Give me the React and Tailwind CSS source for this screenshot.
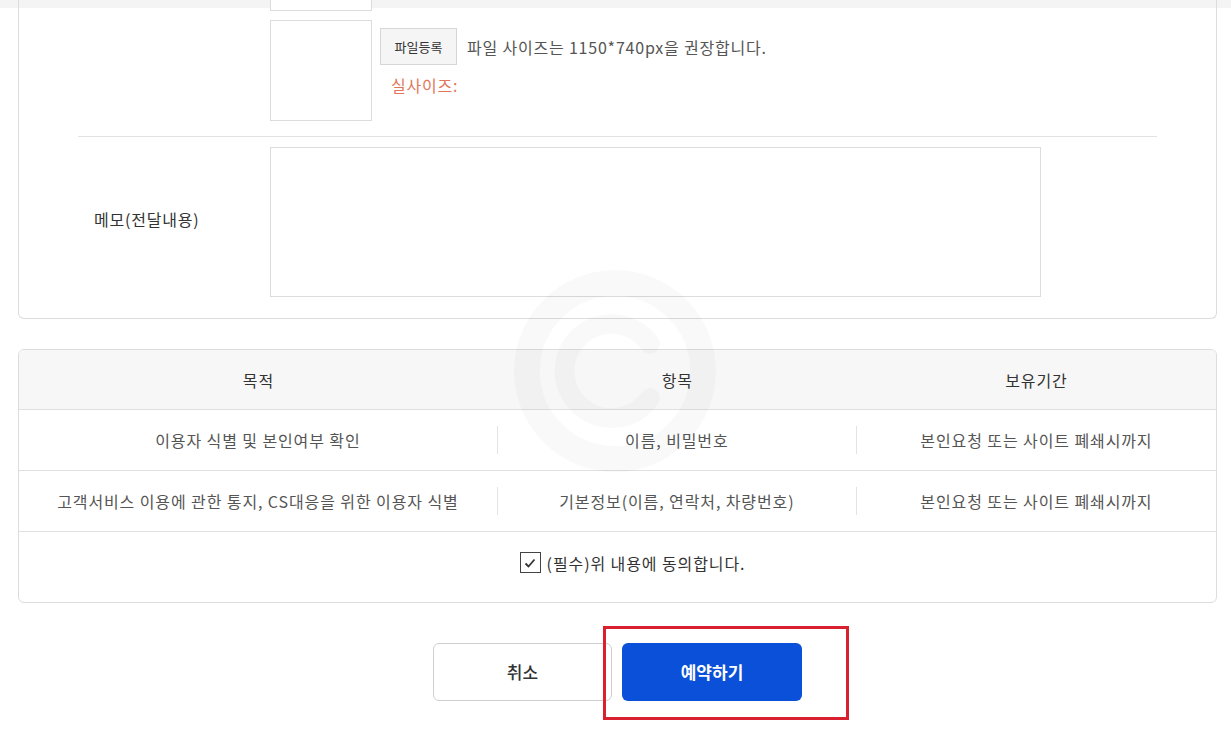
const font = {
  fontFamily: '"Noto Sans CJK KR", "Noto Sans", sans-serif',
};

const rows = [
  {
    purpose: "이용자 식별 및 본인여부 확인",
    item: "이름, 비밀번호",
    period: "본인요청 또는 사이트 폐쇄시까지",
  },
  {
    purpose: "고객서비스 이용에 관한 통지, CS대응을 위한 이용자 식별",
    item: "기본정보(이름, 연락처, 차량번호)",
    period: "본인요청 또는 사이트 폐쇄시까지",
  },
];

function Watermark() {
  return (
    <svg
      className="pointer-events-none absolute left-[508px] top-[264px]"
      width="214"
      height="214"
      viewBox="0 0 214 214"
    >
      <circle cx="107" cy="107" r="88" fill="none" stroke="#000" strokeOpacity="0.025" strokeWidth="26" />
      <path
        d="M142 80 A47 47 0 1 0 142 134"
        fill="none"
        stroke="#000"
        strokeOpacity="0.022"
        strokeWidth="20"
        strokeLinecap="round"
      />
    </svg>
  );
}

export default function App() {
  return (
    <div className="relative min-h-[745px] bg-white text-[#333]" style={font}>
      <div className="absolute left-0 right-0 top-0 h-[8px] bg-[#f4f4f4]" />

      <div className="relative px-[18px] pr-[14px]">
        {/* form card */}
        <div className="rounded-b-md border-x border-b border-[#dcdcdc] px-[59px] pb-[21px]">
          <div className="flex">
            <div className="w-[192px]" />
            <div className="relative h-[11px] w-[102px] border-x border-b border-[#dcdcdc] bg-white" />
          </div>
          <div className="mt-[9px] flex pb-[15px]">
            <div className="w-[192px]" />
            <div className="h-[101px] w-[102px] border border-[#dcdcdc]" />
            <div className="ml-[8px] pt-[8px]">
              <div className="flex items-center">
                <button className="h-[37px] w-[77px] border border-[#d6d6d6] bg-[#f5f5f5] text-[13px] text-[#333]">
                  파일등록
                </button>
                <span className="ml-[10px] text-[16px] tracking-[0.8px] text-[#555]">
                  파일 사이즈는 1150*740px을 권장합니다.
                </span>
              </div>
              <div className="ml-[11px] mt-[8px] text-[16px] tracking-[0.8px] text-[#e2765a]">
                실사이즈:
              </div>
            </div>
          </div>
          <div className="border-t border-[#e2e2e2]" />
          <div className="flex pt-[10px]">
            <div className="flex w-[192px] items-center pb-[6px] pl-[16px] text-[16px] tracking-[0.8px] text-[#333]">
              메모(전달내용)
            </div>
            <textarea className="h-[150px] w-[771px] resize-none border border-[#dcdcdc] bg-transparent outline-none" />
          </div>
        </div>

        {/* privacy table */}
        <div className="mt-[30px] overflow-hidden rounded-md border border-[#dcdcdc]">
          <div className="grid h-[60px] grid-cols-[40%_30%_30%] items-center border-b border-[#e0e0e0] bg-[#f7f7f7] text-center text-[16px] tracking-[0.9px] text-[#333]">
            <div>목적</div>
            <div>항목</div>
            <div>보유기간</div>
          </div>
          {rows.map((row, idx) => (
            <div
              key={idx}
              className="grid h-[61px] grid-cols-[40%_30%_30%] items-center border-b border-[#e0e0e0] text-center text-[16px] tracking-[0.9px] text-[#555]"
            >
              <div className="flex items-center">
                <span className="flex-1">{row.purpose}</span>
                <span className="h-[28px] w-px bg-[#e3e3e3]" />
              </div>
              <div className="flex items-center">
                <span className="flex-1">{row.item}</span>
                <span className="h-[28px] w-px bg-[#e3e3e3]" />
              </div>
              <div>{row.period}</div>
            </div>
          ))}
          <div className="flex h-[70px] items-center justify-center pb-[9px] pl-[30px] text-[16px] tracking-[0.9px] text-[#333]">
            <span className="mr-[6px] flex h-[21px] w-[21px] items-center justify-center border border-[#444] bg-white">
              <svg width="14" height="14" viewBox="0 0 14 14">
                <path d="M2.5 7.5 L5.5 10.5 L11.5 3.5" fill="none" stroke="#333" strokeWidth="1.8" />
              </svg>
            </span>
            (필수)위 내용에 동의합니다.
          </div>
        </div>

        <Watermark />

        {/* buttons */}
        <div className="relative mt-[40px] flex justify-center gap-[10px]">
          <button className="h-[58px] w-[179px] rounded-md border border-[#cfcfcf] bg-white text-[17px] font-medium text-[#333]">
            취소
          </button>
          <button className="h-[58px] w-[180px] rounded-md bg-[#0b50d8] text-[17px] font-bold text-white">
            예약하기
          </button>
          <div className="pointer-events-none absolute left-[585px] top-[-17px] h-[94px] w-[246px] border-[3px] border-[#d8202e]" />
        </div>
      </div>
    </div>
  );
}
